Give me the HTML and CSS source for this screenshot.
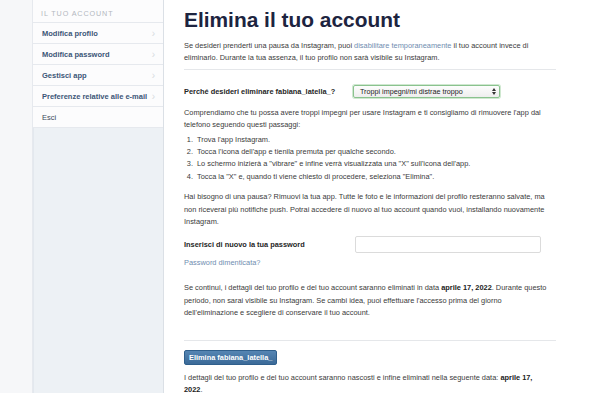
FILE: index.html
```html
<!DOCTYPE html>
<html lang="it">
<head>
<meta charset="utf-8">
<title>Elimina il tuo account</title>
<link rel="stylesheet" href="styles.css">
</head>
<body>
<div class="page">
  <div class="gutter"></div>
  <aside class="sidebar">
    <div class="side-head">IL TUO ACCOUNT</div>
    <ul class="side-list">
      <li><span>Modifica profilo</span><i class="chev">›</i></li>
      <li><span>Modifica password</span><i class="chev">›</i></li>
      <li><span>Gestisci app</span><i class="chev">›</i></li>
      <li><span>Preferenze relative alle e-mail</span><i class="chev">›</i></li>
      <li><span>Esci</span></li>
    </ul>
    <div class="side-fill"></div>
  </aside>
  <main class="main">
    <h1 class="title">Elimina il tuo account</h1>
    <p class="text intro">Se desideri prenderti una pausa da Instagram, puoi <a class="link">disabilitare temporaneamente</a> il tuo account invece di eliminarlo. Durante la tua assenza, il tuo profilo non sarà visibile su Instagram.</p>
    <hr class="rule">
    <div class="field">
      <label class="label">Perché desideri eliminare fabiana_latella_?</label>
      <div class="select"><span>Troppi impegni/mi distrae troppo</span><i class="arrows"></i></div>
    </div>
    <p class="text">Comprendiamo che tu possa avere troppi impegni per usare Instagram e ti consigliamo di rimuovere l'app dal telefono seguendo questi passaggi:</p>
    <ol class="steps">
      <li>Trova l'app Instagram.</li>
      <li>Tocca l'icona dell'app e tienila premuta per qualche secondo.</li>
      <li>Lo schermo inizierà a "vibrare" e infine verrà visualizzata una "X" sull'icona dell'app.</li>
      <li>Tocca la "X" e, quando ti viene chiesto di procedere, seleziona "Elimina".</li>
    </ol>
    <p class="text">Hai bisogno di una pausa? Rimuovi la tua app. Tutte le foto e le informazioni del profilo resteranno salvate, ma non riceverai più notifiche push. Potrai accedere di nuovo al tuo account quando vuoi, installando nuovamente Instagram.</p>
    <div class="field pw">
      <label class="label">Inserisci di nuovo la tua password</label>
      <div class="input"></div>
    </div>
    <a class="link forgot">Password dimenticata?</a>
    <p class="text cont">Se continui, i dettagli del tuo profilo e del tuo account saranno eliminati in data <b>aprile 17, 2022</b>. Durante questo periodo, non sarai visibile su Instagram. Se cambi idea, puoi effettuare l'accesso prima del giorno dell'eliminazione e scegliere di conservare il tuo account.</p>
    <hr class="rule rule2">
    <button class="btn">Elimina fabiana_latella_</button>
    <p class="text final">I dettagli del tuo profilo e del tuo account saranno nascosti e infine eliminati nella seguente data: <b>aprile 17, 2022</b>.</p>
  </main>
</div>
</body>
</html>
```
FILE: styles.css
```css
html, body {
  margin: 0;
  padding: 0;
  height: 100%;
  overflow: hidden;
  background: #ffffff;
}
body {
  font-family: "Liberation Sans", Arial, sans-serif;
  color: #262626;
}
.page {
  display: flex;
  height: 393px;
}
.gutter {
  width: 32px;
  flex: none;
  background: #f6f7f9;
  border-right: 1px solid #e6e9ee;
}
.sidebar {
  width: 130px;
  flex: none;
  display: flex;
  flex-direction: column;
  border-right: 1px solid #dbe0e6;
  background: #fcfcfd;
}
.side-head {
  height: 23px;
  box-sizing: border-box;
  padding: 9px 0 0 8px;
  font-size: 7.2px;
  color: #b3b8c0;
  letter-spacing: 0.9px;
  border-bottom: 1px solid #e6e9ee;
}
.side-list {
  list-style: none;
  margin: 0;
  padding: 0;
}
.side-list li {
  height: 20px;
  box-sizing: content-box;
  display: flex;
  align-items: center;
  justify-content: space-between;
  padding: 0 8px 0 9px;
  border-bottom: 1px solid #e6e9ee;
  font-size: 7.5px;
  font-weight: bold;
  color: #3b5677;
}
.side-list li:last-child {
  font-weight: normal;
  color: #3b4a5c;
}
.chev {
  font-style: normal;
  font-size: 10px;
  color: #d7dbe0;
  font-weight: normal;
}
.side-fill {
  flex: 1;
  background: #edf1f5;
  border-left: 1px solid #e3e8ee;
}
.main {
  flex: none;
  width: 372px;
  padding: 0 0 0 20px;
}
.title {
  margin: 6px 0 0 0;
  font-size: 20.9px;
  line-height: 28px;
  font-weight: bold;
  color: #1d2440;
}
.text {
  margin: 0;
  font-size: 7.4px;
  line-height: 12.4px;
  color: #3a3a3a;
}
.intro {
  margin-top: 6px;
}
.link {
  color: #6f8db0;
  text-decoration: none;
}
.rule {
  border: 0;
  border-top: 1px solid #e5e7ea;
  margin: 4px 0 0 0;
}
.field {
  display: flex;
  align-items: center;
  margin: 15px 0 9px 0;
}
.label {
  width: 169px;
  font-size: 7.4px;
  font-weight: bold;
  color: #262626;
}
.select {
  width: 147px;
  height: 13px;
  box-sizing: border-box;
  border: 1px solid #8ac28e;
  box-shadow: 0 0 0 1px #cfe8d0;
  border-radius: 2px;
  background: linear-gradient(#fdfdfd, #eeeeee);
  display: flex;
  align-items: center;
  justify-content: space-between;
  padding: 0 5px 0 6px;
  font-size: 7.2px;
  color: #222;
}
.arrows {
  width: 0;
  height: 7px;
  position: relative;
}
.arrows::before, .arrows::after {
  content: "";
  position: absolute;
  left: -2px;
  border-left: 2px solid transparent;
  border-right: 2px solid transparent;
}
.arrows::before {
  top: 0;
  border-bottom: 3px solid #333;
}
.arrows::after {
  bottom: 0;
  border-top: 3px solid #333;
}
.steps {
  margin: 2px 0 0 0;
  padding: 0 0 0 11px;
  font-size: 7.4px;
  line-height: 12.4px;
  color: #3a3a3a;
}
.steps li {
  padding-left: 2px;
}
.steps + .text {
  margin-top: 8px;
}
.pw {
  margin: 8px 0 4px 0;
}
.pw .label {
  width: 171px;
}
.input {
  width: 186px;
  height: 17px;
  box-sizing: border-box;
  border: 1px solid #dbdbdb;
  border-radius: 2px;
  background: #fff;
}
.forgot {
  display: block;
  font-size: 7.4px;
  line-height: 12px;
}
.cont {
  margin-top: 13px;
}
.rule2 {
  margin-top: 20px;
}
.btn {
  display: block;
  margin: 9px 0 0 0;
  height: 15px;
  padding: 0 4px;
  border: 1px solid #2f5f8c;
  border-radius: 2px;
  background: linear-gradient(#5585b3, #3b6a98);
  color: #fff;
  font-family: "Liberation Sans", Arial, sans-serif;
  font-size: 7.4px;
  font-weight: bold;
  line-height: 13px;
}
.final {
  margin-top: 7px;
  width: 360px;
}
.final b, .cont b {
  color: #222;
}
```
